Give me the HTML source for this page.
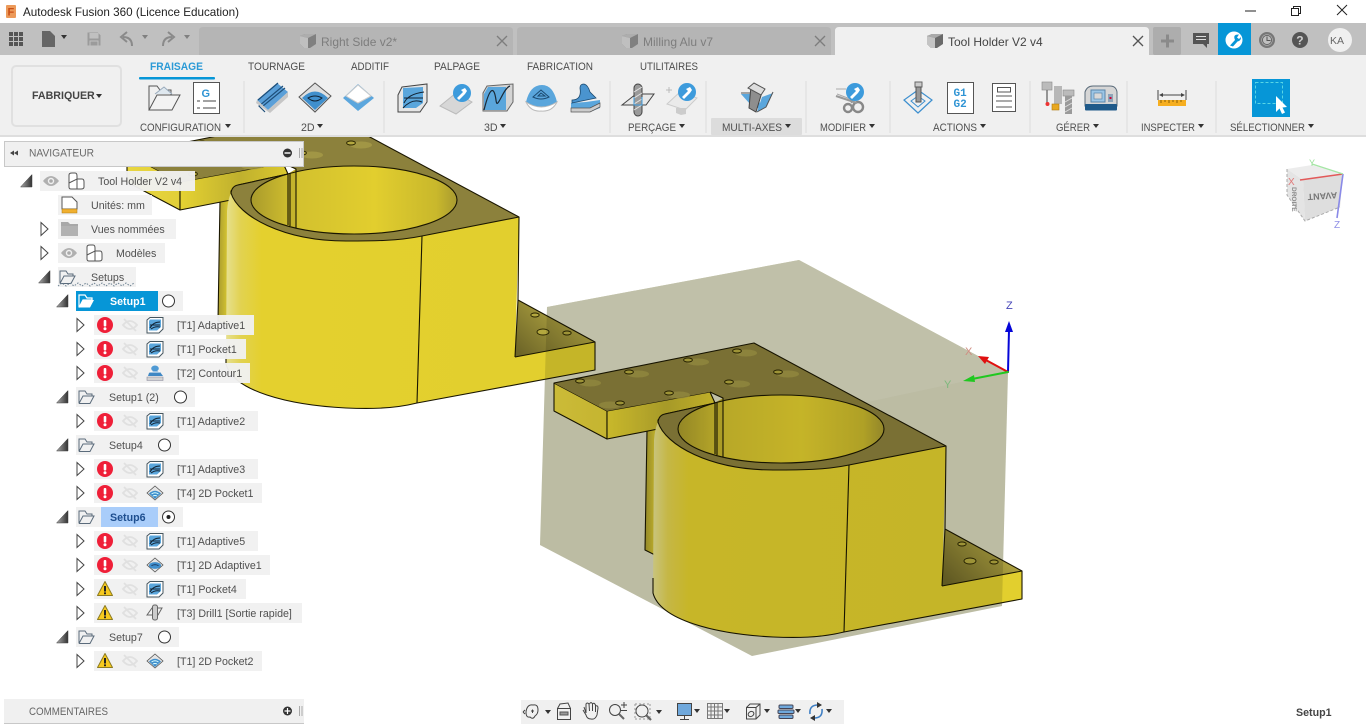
<!DOCTYPE html>
<html lang="fr">
<head>
<meta charset="utf-8">
<title>Autodesk Fusion 360</title>
<style>
html,body{margin:0;padding:0;background:#fff;width:1366px;height:728px;overflow:hidden}
svg{position:absolute;left:0;top:0;display:block}
text{font-family:"Liberation Sans",Arial,sans-serif}
.t{font-size:10.67px;fill:#505050}
.h{font-size:10.67px;fill:#4c4c4c}
.s{font-size:10.67px;fill:#4f4f4f}
.tab{font-size:12px;fill:#7d7d7d}
.e{stroke:#1a1600;stroke-width:1.1;stroke-linejoin:round}
.n{fill:none}
</style>
</head>
<body>
<svg width="1366" height="728" viewBox="0 0 1366 728" xmlns="http://www.w3.org/2000/svg">
<defs>
<linearGradient id="cyl" gradientUnits="userSpaceOnUse" x1="653" x2="950" y1="0" y2="0">
<stop offset="0" stop-color="#e6e090"/><stop offset=".05" stop-color="#e2d250"/><stop offset=".12" stop-color="#e4d02e"/><stop offset="1" stop-color="#e2cf2e"/>
</linearGradient>
<linearGradient id="hole" gradientUnits="userSpaceOnUse" x1="678" x2="884" y1="0" y2="0">
<stop offset="0" stop-color="#a89a2c"/><stop offset=".2" stop-color="#d2c02e"/><stop offset=".6" stop-color="#e2ce2e"/><stop offset=".9" stop-color="#c9b82c"/><stop offset="1" stop-color="#a89a30"/>
</linearGradient>
<linearGradient id="fl" gradientUnits="userSpaceOnUse" x1="607" x2="715" y1="0" y2="0">
<stop offset="0" stop-color="#e6d332"/><stop offset=".55" stop-color="#bfb02e"/><stop offset="1" stop-color="#dcc92e"/>
</linearGradient>
<linearGradient id="fl2" gradientUnits="userSpaceOnUse" x1="554" x2="607" y1="0" y2="0">
<stop offset="0" stop-color="#e8d640"/><stop offset="1" stop-color="#e2cf38"/>
</linearGradient>
<linearGradient id="str" gradientUnits="userSpaceOnUse" x1="645" x2="656" y1="0" y2="0">
<stop offset="0" stop-color="#a99c30"/><stop offset="1" stop-color="#dccb30"/>
</linearGradient>
<linearGradient id="ft" gradientUnits="userSpaceOnUse" x1="945" y1="580" x2="985" y2="540">
<stop offset="0" stop-color="#6e6628"/><stop offset="1" stop-color="#ab9f3f"/>
</linearGradient>
<linearGradient id="tri" x1="0" x2="1" y1="0" y2="0">
<stop offset="0" stop-color="#aaa"/><stop offset="1" stop-color="#333"/>
</linearGradient>

<g id="model">
  <polygon points="647,425 656,425 656,555 645,550" style="fill:url(#str)"/>
  <path class="e n" d="M647,430 L645,550 L655,555"/>
  <polygon class="e" points="554,383 607,411 607,439 554,411" style="fill:url(#fl2)"/>
  <polygon class="e" points="607,411 710,392 715,403 665,414 658,420 658,429 607,439" style="fill:url(#fl)"/>
  <path d="M653,590 L654,440 Q655,428 658,422 C665,445 710,470 773,470 C800,470 825,470 849,465 L946,446 L942,586 L1022,571 L1022,599 L844,632 C820,638 795,638 773,637 C715,634 660,620 653,593Z" style="fill:url(#cyl)"/>
  <path d="M554,383 L754,343 L946,446 L849,465 C825,470 800,470 773,470 C710,470 665,445 658,422 Q659,415 665,414 L715,403 L723,398 L710,392 L607,411Z" fill="#8c813c"/>
  <g fill="#a99d48" opacity=".75">
    <ellipse cx="590" cy="383" rx="11" ry="3.5"/><ellipse cx="638" cy="374" rx="11" ry="3.5"/>
    <ellipse cx="698" cy="362" rx="11" ry="3.5"/><ellipse cx="746" cy="353" rx="11" ry="3.500"/>
    <ellipse cx="788" cy="374" rx="11" ry="3.5"/><ellipse cx="739" cy="384" rx="11" ry="3.5"/>
    <ellipse cx="679" cy="395" rx="11" ry="3.5"/><ellipse cx="610" cy="405" rx="11" ry="3.5"/>
  </g>
  <ellipse cx="781" cy="429" rx="103" ry="34" style="fill:url(#hole)"/>
  <polygon points="715,403 723,398 723,457 715,454" fill="#c4b32c"/>
  <ellipse class="e n" cx="781" cy="429" rx="103" ry="34"/>
  <path class="e n" d="M710,392 L723,398 L723,457 M715,403 L715,454 M717,402 L717,455"/>
  <path class="e n" d="M554,383 L754,343 L946,446 L849,465 C825,470 800,470 773,470 C710,470 665,445 658,422 Q659,415 665,414 L715,403"/>
  <path class="e n" d="M849,465 L844,632"/>
  <polygon points="945,529 1022,571 942,586" style="fill:url(#ft)"/>
  <path class="e n" d="M946,446 L945,529 M942,586 L945,529 L1022,571 L942,586 M1022,571 L1022,599 L844,632 C820,638 795,638 773,637 C715,634 660,620 653,593 L653,578"/>
  <g fill="#b4a83f" stroke="#2a2500" stroke-width=".9">
    <ellipse cx="580" cy="381" rx="4.4" ry="2"/><ellipse cx="629" cy="372" rx="4.4" ry="2"/>
    <ellipse cx="688" cy="360" rx="4.4" ry="2"/><ellipse cx="737" cy="351" rx="4.4" ry="2"/>
    <ellipse cx="778" cy="372" rx="4.4" ry="2"/><ellipse cx="729" cy="382" rx="4.4" ry="2"/>
    <ellipse cx="669" cy="393" rx="4.4" ry="2"/><ellipse cx="620" cy="403" rx="4.4" ry="2"/>
    <ellipse cx="962" cy="544" rx="4.2" ry="2"/><ellipse cx="970" cy="561" rx="6" ry="3"/><ellipse cx="994" cy="562" rx="4.2" ry="2"/>
  </g>
</g>

<path id="dn" d="M-3,-2 L3,-2 L0,2Z" fill="#333"/>
<path id="cl" d="M-3.5,-6.5 L3.5,0 L-3.5,6.5Z" fill="#fff" stroke="#444" stroke-width="1"/>
<path id="ex" d="M5.5,-6.5 L5.5,6 L-6,6Z" fill="url(#tri)" stroke="#444" stroke-width=".5"/>
<g id="err"><circle r="8" fill="#ef1f38"/><rect x="-1.3" y="-5" width="2.6" height="6.5" rx="1" fill="#fff"/><circle cy="3.8" r="1.5" fill="#fff"/></g>
<g id="warn"><path d="M0,-7.5 L7.5,6.5 L-7.5,6.5Z" fill="#f6c91e" stroke="#8d7c22" stroke-width="1" stroke-linejoin="round"/><rect x="-1" y="-3" width="2" height="5.5" fill="#222"/><rect x="-1" y="3.4" width="2" height="1.8" fill="#222"/></g>
<g id="eyeoff" stroke="#e0e0e0" fill="none" stroke-width="1.8"><path d="M-7,0 Q0,-8 7,0 Q0,8 -7,0Z"/><path d="M-6,-6 L6,6"/></g>
<g id="eye"><path d="M-8,0 Q0,-10 8,0 Q0,10 -8,0Z" fill="#b0b0b0"/><circle r="3.2" fill="#f0f0f0"/><circle r="1.8" fill="#aaa"/></g>
<g id="body" fill="#fff" stroke="#555" stroke-width="1"><path d="M-7,-6 Q-7,-8 -4,-8 L-1,-8 Q1,-8 1,-5 L1,-2 L6,-2 Q8,-2 8,1 L8,6 Q8,8 5,8 L-5,8 Q-7,8 -7,6Z"/><path d="M-7,2 L1,-2 L1,8" fill="none"/></g>
<g id="fold"><path d="M-7,6.5 L-7,-6 L-1,-6 L1,-3 L6,-3 L6,-1 M-7,6.5 L4,6.5 L8,-1 L-3,-1 L-7,6.5" fill="none" stroke="#5b6b7b" stroke-width="1"/></g>
<g id="foldw"><path d="M-7,6.5 L-7,-6 L-1,-6 L1,-3 L6,-3 L6,-1 L-3,-1 L-7,6.5" fill="none" stroke="#fff" stroke-width="1.2"/><path d="M-7,6.5 L4,6.5 L8,-1 L-3,-1Z" fill="#fff"/></g>
<g id="ad"><path d="M-5,-7.500 L8,-7.500 L8,4 L4,8 L-8,8 L-8,-5Z" fill="#fff" stroke="#46565f" stroke-width="1"/><path d="M-5,-5.500 L6,-5.500 L6,2 L2,5.500 L-6,5.500 L-6,-4Z" fill="#5aa6dc"/><path d="M-5,3 Q-2,-3 5,-3 M-5,0 L5,0 M-4,4 Q0,1 5,2" stroke="#123" stroke-width="1" fill="none"/></g>
<g id="cont"><ellipse cy="-4.5" rx="3.8" ry="3" fill="#4f9ad4"/><path d="M-6,0 Q0,-4 5,-1 L8,3 L-7,3Z" fill="#3f88c4"/><path d="M-8,4 L8,4 L8,7.5 L-8,7.5Z" fill="#d3d3d3" stroke="#889" stroke-width=".6"/><path d="M-5,-1 L5,-1" stroke="#fff"/></g>
<g id="dp"><path d="M0,-7 L8,0 L0,7 L-8,0Z" fill="#e4e4e4" stroke="#555" stroke-width=".8"/><path d="M-6,0.5 Q0,-5 6,0.5 L0,6 Z" fill="#3f8fcd"/><path d="M-3.5,1 Q0,-1.5 3.5,1 M-2,3 Q0,2 2,3" stroke="#dff" fill="none" stroke-width=".9"/></g>
<g id="da"><path d="M0,-7 L8,0 L0,7 L-8,0Z" fill="#e4e4e4" stroke="#555" stroke-width=".8"/><ellipse cy=".5" rx="6" ry="3.4" fill="#3f8fcd"/><path d="M-3.5,.5 Q0,-1 3.5,.5" stroke="#124" fill="none" stroke-width=".8"/></g>
<g id="dr"><path d="M-8,2 L-3,-5 L7,-5 L3,2Z" fill="none" stroke="#666"/><rect x="-2.5" y="-8" width="5" height="15" rx="2" fill="#ccc" stroke="#666"/></g>
<g id="cube"><path d="M-8,-5 L-3,-7 L8,-7 L8,3 L2,7 L-4,7 L-8,3Z" fill="#6a6a6a"/><path d="M-8,-5 L0,-3 L8,-7 L-3,-7Z" fill="#aaa"/><path d="M-8,-5 L0,-3 L0,7 L-4,7 L-8,3Z" fill="#c4c4c4"/></g>
</defs>

<!-- white page -->
<rect width="1366" height="728" fill="#fff"/>

<!-- stock box -->
<polygon points="547,307 799,260 1008,372 1002,606 752,656 540,545" fill="#d7d7bb"/>
<polygon points="547,307 799,260 1008,372 760,425 553,400" fill="#dcdcc2"/>

<!-- models -->
<use href="#model" transform="translate(-427 -229)"/>
<use href="#model"/>
<polygon points="547,307 799,260 1008,372 1002,606 752,656 540,545" fill="#000" fill-opacity=".125"/>

<!-- triad -->
<g stroke-linecap="round">
  <path d="M1008,372 L1009,330" stroke="#0505d8" stroke-width="2"/>
  <path d="M1009,321 L1013,332 L1005,332Z" fill="#0505d8"/>
  <path d="M1008,372 L984,359" stroke="#e01010" stroke-width="2"/>
  <path d="M978,356 L989,357 L985,364Z" fill="#e01010"/>
  <path d="M1008,372 L972,379" stroke="#20c820" stroke-width="2"/>
  <path d="M963,381 L974,375 L975,382Z" fill="#20c820"/>
</g>
<text x="1006" y="309" font-size="11" fill="#4545b8">Z</text>
<text x="965" y="355" font-size="11" fill="#cf8c80">X</text>
<text x="944" y="388" font-size="11" fill="#7cb87c">Y</text>

<!-- view cube -->
<g>
  <polygon points="1287,169 1312,165 1343,174 1303,180" fill="#ececec"/>
  <polygon points="1287,169 1303,180 1305,221 1287,195" fill="#e4e4e4"/>
  <polygon points="1303,180 1343,174 1340,207 1305,221" fill="#dedede"/>
  <path d="M1287,169 L1287,195 L1305,221 L1340,207" fill="none" stroke="#aaa" stroke-dasharray="3 2"/>
  <path d="M1300,180 L1343,174" stroke="#e25a5a" stroke-width="1.6"/>
  <path d="M1343,174 L1337,218" stroke="#8a8ae8" stroke-width="1.6"/>
  <path d="M1312,164 L1343,174" stroke="#a5e6a5" stroke-width="1.4"/>
  <text x="1288" y="185" font-size="10" fill="#e07878">X</text>
  <text x="1309" y="166" font-size="9" fill="#98e098">Y</text>
  <text x="1334" y="228" font-size="10" fill="#9090e6">Z</text>
  <text transform="translate(1337,192) rotate(176)" font-size="9" font-weight="bold" fill="#777">AVANT</text>
  <text transform="translate(1292,187) rotate(90)" font-size="6.5" font-weight="bold" fill="#888">DROITE</text>
</g>

<!-- title bar -->
<rect x="0" y="0" width="1366" height="23" fill="#fff"/>
<rect x="6" y="5" width="10" height="13" rx="1" fill="#ec9a5a"/>
<text x="7.5" y="15.5" font-size="11" font-weight="bold" fill="#c94f16">F</text>
<text x="23" y="16" font-size="12" fill="#222" textLength="216" lengthAdjust="spacingAndGlyphs">Autodesk Fusion 360 (Licence Education)</text>
<path d="M1245,11 H1256" stroke="#222" stroke-width="1"/>
<path d="M1291.5,8.5 H1298.5 V15.5 H1291.5Z M1293.5,8.5 V6.5 H1300.5 V13.5 H1298.5" fill="#fff" stroke="#222" stroke-width="1"/>
<path d="M1337,5 L1347,15 M1347,5 L1337,15" stroke="#222" stroke-width="1"/>

<!-- tab bar -->
<rect x="0" y="23" width="1366" height="32" fill="#c0c0c0"/>
<g fill="#555">
  <rect x="9" y="32" width="4" height="4"/><rect x="14" y="32" width="4" height="4"/><rect x="19" y="32" width="4" height="4"/>
  <rect x="9" y="37" width="4" height="4"/><rect x="14" y="37" width="4" height="4"/><rect x="19" y="37" width="4" height="4"/>
  <rect x="9" y="42" width="4" height="4"/><rect x="14" y="42" width="4" height="4"/><rect x="19" y="42" width="4" height="4"/>
</g>
<path d="M42,31 H50 L55,36 V47 H42Z" fill="#666"/>
<use href="#dn" x="64" y="37"/>
<path d="M87,32 H98 L101,35 V46 H87Z M90,33 V38 H98 V33 M90,46 V41 H98 V46" fill="#9b9b9b" stroke="#c0c0c0" stroke-width="1"/>
<path d="M132,46 Q132,37 123,37 M127,32 L121,37 L127,42" fill="none" stroke="#8a8a8a" stroke-width="2"/>
<use href="#dn" x="145" y="37" opacity=".45"/>
<path d="M163,46 Q163,37 172,37 M168,32 L174,37 L168,42" fill="none" stroke="#8a8a8a" stroke-width="2"/>
<use href="#dn" x="187" y="37" opacity=".45"/>

<path d="M199,31 Q199,27 203,27 H509 Q513,27 513,31 V55 H199Z" fill="#b5b5b5"/>
<path d="M517,31 Q517,27 521,27 H827 Q831,27 831,31 V55 H517Z" fill="#b5b5b5"/>
<path d="M835,31 Q835,27 839,27 H1145 Q1149,27 1149,31 V55 H835Z" fill="#f0f0f0"/>
<use href="#cube" x="308" y="41" opacity=".7"/>
<use href="#cube" x="630" y="41" opacity=".7"/>
<use href="#cube" x="935" y="41"/>
<text x="321" y="46" class="tab">Right Side v2*</text>
<text x="643" y="46" class="tab">Milling Alu v7</text>
<text x="948" y="46" font-size="12" fill="#444">Tool Holder V2 v4</text>
<path d="M497,36 L507,46 M507,36 L497,46 M815,36 L825,46 M825,36 L815,46" stroke="#7d7d7d" stroke-width="1.3"/>
<path d="M1133,36 L1143,46 M1143,36 L1133,46" stroke="#555" stroke-width="1.3"/>
<rect x="1153" y="27" width="28" height="28" rx="2" fill="#adadad"/>
<path d="M1161,41 H1174 M1167.5,34.5 V47.5" stroke="#8a8a8a" stroke-width="3"/>
<path d="M1193,33 H1209 V44 H1207 V48 L1203,44 H1193Z" fill="#555"/>
<path d="M1196,36.5 H1206 M1196,39.5 H1206" stroke="#ddd" stroke-width="1"/>
<rect x="1218" y="23" width="33" height="32" fill="#0696d7"/>
<circle cx="1234" cy="40" r="8.5" fill="#fff"/>
<path d="M1230,45.5 L1235,40 Q1233,36 1236,34.8 L1239,34.5 L1237,37.5 L1239,39 L1241,37 Q1241,41 1237.5,41.5 L1233,46.5Z" fill="#0696d7"/>
<circle cx="1267" cy="40" r="7.5" fill="#777" stroke="#777"/><circle cx="1267" cy="40" r="5.6" fill="#c0c0c0"/><circle cx="1267" cy="40" r="4.6" fill="none" stroke="#666"/><path d="M1267,36.5 V40.5 H1270.5" stroke="#555" fill="none"/>
<circle cx="1300" cy="40" r="8" fill="#555"/>
<text x="1296.3" y="44.5" font-size="12" font-weight="bold" fill="#d0d0d0">?</text>
<circle cx="1340" cy="40" r="12" fill="#f0f0f0"/>
<text x="1330" y="44" font-size="10.5" fill="#666">KA</text>

<!-- toolbar -->
<rect x="0" y="55" width="1366" height="81" fill="#f0f0f0"/>
<rect x="0" y="135" width="1366" height="2" fill="#dedede"/>
<rect x="12" y="66" width="109" height="60" rx="4" fill="#f0f0f0" stroke="#e0e0e0" stroke-width="2"/>
<text x="32" y="99" font-size="10.67" font-weight="bold" fill="#444">FABRIQUER</text>
<use href="#dn" x="99" y="96"/>

<text x="150" y="70" font-size="10.67" font-weight="bold" fill="#2b9ad6" textLength="53" lengthAdjust="spacingAndGlyphs">FRAISAGE</text>
<rect x="139" y="77" width="76" height="2.5" rx="1" fill="#0696d7"/>
<text class="h" x="248" y="70" textLength="57" lengthAdjust="spacingAndGlyphs">TOURNAGE</text>
<text class="h" x="351" y="70" textLength="38" lengthAdjust="spacingAndGlyphs">ADDITIF</text>
<text class="h" x="434" y="70" textLength="46" lengthAdjust="spacingAndGlyphs">PALPAGE</text>
<text class="h" x="527" y="70" textLength="66" lengthAdjust="spacingAndGlyphs">FABRICATION</text>
<text class="h" x="640" y="70" textLength="58" lengthAdjust="spacingAndGlyphs">UTILITAIRES</text>

<path d="M244,81 V133 M384,81 V133 M610,81 V133 M706,81 V133 M806,81 V133 M890,81 V133 M1030,81 V133 M1127,81 V133 M1216,81 V133" stroke="#e2e2e2" stroke-width="1.5"/>
<rect x="711" y="118" width="91" height="17" rx="1" fill="#dcdcdc"/>

<text class="s" x="140" y="131" textLength="81" lengthAdjust="spacingAndGlyphs">CONFIGURATION</text><use href="#dn" x="228" y="126"/>
<text class="s" x="301" y="131">2D</text><use href="#dn" x="320" y="126"/>
<text class="s" x="484" y="131">3D</text><use href="#dn" x="503" y="126"/>
<text class="s" x="628" y="131" textLength="48" lengthAdjust="spacingAndGlyphs">PERÇAGE</text><use href="#dn" x="682" y="126"/>
<text class="s" x="722" y="131" textLength="60" lengthAdjust="spacingAndGlyphs">MULTI-AXES</text><use href="#dn" x="788" y="126"/>
<text class="s" x="820" y="131" textLength="46" lengthAdjust="spacingAndGlyphs">MODIFIER</text><use href="#dn" x="872" y="126"/>
<text class="s" x="933" y="131" textLength="44" lengthAdjust="spacingAndGlyphs">ACTIONS</text><use href="#dn" x="983" y="126"/>
<text class="s" x="1056" y="131" textLength="34" lengthAdjust="spacingAndGlyphs">GÉRER</text><use href="#dn" x="1096" y="126"/>
<text class="s" x="1141" y="131" textLength="54" lengthAdjust="spacingAndGlyphs">INSPECTER</text><use href="#dn" x="1201" y="126"/>
<text class="s" x="1230" y="131" textLength="75" lengthAdjust="spacingAndGlyphs">SÉLECTIONNER</text><use href="#dn" x="1311" y="126"/>

<!-- toolbar icons -->
<g fill="none" stroke="#555" stroke-width="1">
  <path d="M149,110 V86 H157 L160,90 H171 V97" />
  <path d="M149,110 H172 L180,95 H157Z" fill="#f3f3f3"/>
  <path d="M155,94 L164,87 L172,94" fill="#dfe8ef" stroke="#9ab"/>
</g>
<rect x="193.500" y="82.500" width="26" height="31" fill="#fff" stroke="#555"/>
<text x="201.500" y="97" font-size="11" font-weight="bold" fill="#2f94d4">G</text>
<path d="M197,101 H200 M203,101 H216 M197,108 H200 M203,108 H216" stroke="#444" stroke-width="1"/>

<!-- 2D -->
<path d="M257,100 L277,83 L288,92 L268,110 Z" fill="#5a9fd8"/>
<path d="M265,112 L259,106 L283,86 M258,100 L278,83 M263,106 L285,88" stroke="#1e4f7a" stroke-width="1.2" fill="none"/>
<path d="M268,110 L288,92 L288,97 L270,113 L256,103 L257,100Z" fill="#c6c6c6"/>
<path d="M315,83 L331,96 L315,112 L299,97Z" fill="#e0e0e0" stroke="#555"/>
<path d="M302,98 Q315,85 328,98 L315,110Z" fill="#3f8fcd"/>
<path d="M308,98 Q315,94 322,98 Q315,104 308,98Z" fill="none" stroke="#123" />
<path d="M358,84 L374,98 L358,111 L343,98Z" fill="#5ba6dd"/>
<path d="M358,85 L371,96 L358,103 L346,96Z" fill="#fff" stroke="#ccc"/>

<!-- 3D -->
<path d="M402,87 L427,84 V102 L420,112 H398 V95Z" fill="#e6e6e6" stroke="#444"/>
<path d="M403,88 L423,87 V103 L416,108 H403Z" fill="#5aa6dc"/>
<path d="M404,103 Q408,94 424,92 M404,98 H423 M403,108 Q412,98 422,102" stroke="#123" fill="none"/>
<path d="M440,106 L456,93 L472,102 L456,114Z" fill="#d7d7d7" stroke="#bbb"/>
<circle cx="462" cy="93" r="9" fill="#3d9bdc"/>
<path d="M457,98 L463,92 L461,90 L465,88 L467,91 L465,94 L459,100Z" fill="#fff"/>
<path d="M487,86 L513,84 V102 L507,111 H483 V93Z" fill="#d4d4d4" stroke="#666"/>
<path d="M488,87 H506 V110 H484 V94Z" fill="#5aa6dc"/>
<path d="M484,110 C490,86 494,86 496,100 C497,112 503,88 510,86" stroke="#1a2a38" fill="none" stroke-width="1.2"/>
<path d="M526,102 Q530,85 542,85 Q553,85 557,102 Q542,112 526,102Z" fill="#5aa6dc"/>
<path d="M526,102 Q541,112 557,102 Q552,112 541,111 Q531,112 526,102Z" fill="#fff" stroke="#bbb"/>
<path d="M533,97 L541,90 L549,97 Q541,101 533,97Z" fill="none" stroke="#1b4a70"/><path d="M538,96 L541,93 L545,96Z" fill="none" stroke="#1b4a70"/>
<path d="M571,111 V103 L586,102 L600,100 V108 L590,112Z" fill="#5aa6dc"/>
<path d="M572,100 Q582,100 580,88 Q580,84 584,84 Q588,85 590,92 L596,98 L572,103Z" fill="#4a94cf" stroke="#1b4a70" stroke-width=".8"/>
<path d="M571,108 H590 L600,103 V107 L590,112 H571Z" fill="#ccc" stroke="#555" stroke-width=".7"/>

<!-- drill -->
<path d="M622,105 L636,94 H654 L646,105Z" fill="#e8e8e8" stroke="#444"/>
<rect x="634" y="84" width="8" height="32" rx="4" fill="#9a9a9a" stroke="#444"/>
<path d="M634,92 L642,87 M634,98 L642,93 M634,104 L642,99 M634,110 L642,105" stroke="#e0e0e0"/>
<path d="M634,97 V105 H642 V97" fill="none" stroke="#3d9bdc" stroke-width="1"/>
<path d="M666,90 H672 M669,87 V93" stroke="#bbb"/>
<path d="M667,104 L680,92 L697,98 L685,110Z" fill="#eaeaea" stroke="#ccc"/>
<path d="M676,108 H686 V114 L681,115 L676,113Z" fill="#ccc"/>
<circle cx="687" cy="92" r="9" fill="#3d9bdc"/>
<path d="M682,97 L688,91 L686,89 L690,87 L692,90 L690,93 L684,99Z" fill="#fff"/>

<!-- multi axes -->
<path d="M741,94 L757,94 L762,110 L750,104Z" fill="#5aa6dc"/>
<path d="M762,97 L773,93 L767,106 L757,112Z" fill="#5aa6dc"/>
<path d="M741,93 H757 M773,92 L766,107 L757,112" stroke="#555" fill="none"/>
<path d="M751,86 L762,92 L756,112 L749,108Z" fill="#8e8e8e" stroke="#444"/>
<path d="M748,88 L754,83 L765,89 L761,95Z" fill="#ddd" stroke="#555"/>

<!-- modifier -->
<path d="M836,89 H846 M837,94 L853,100" stroke="#aaa" fill="none"/>
<circle cx="848" cy="108" r="4" fill="none" stroke="#888" stroke-width="2.4"/>
<circle cx="858" cy="107" r="5" fill="none" stroke="#888" stroke-width="2.4"/>
<path d="M836,96 L857,103 M848,91 L852,103" stroke="#999" stroke-width="2"/>
<circle cx="855" cy="92" r="9" fill="#3d9bdc"/>
<path d="M850,97 L856,91 L854,89 L858,87 L860,90 L858,93 L852,99Z" fill="#fff"/>

<!-- actions -->
<path d="M918,90 L932,100 L918,113 L904,100Z" fill="none" stroke="#3d8fcf" stroke-width="1.2"/>
<path d="M918,96 L925,101 L918,107 L911,101Z" fill="none" stroke="#3d8fcf" stroke-width="1"/>
<rect x="915" y="82" width="7" height="5" fill="#ccc" stroke="#666"/>
<rect x="916" y="87" width="5" height="15" fill="#999" stroke="#555"/>
<rect x="947.500" y="82.500" width="26" height="31" fill="#fff" stroke="#555"/>
<text x="953.500" y="96" font-size="11" font-weight="bold" fill="#2f94d4" style="font-family:'Liberation Mono',monospace">G1</text>
<text x="953.500" y="107" font-size="11" font-weight="bold" fill="#2f94d4" style="font-family:'Liberation Mono',monospace">G2</text>
<rect x="992.500" y="83.500" width="23" height="28" fill="#fff" stroke="#555"/>
<rect x="997.500" y="87.500" width="13" height="4.500" fill="none" stroke="#555"/>
<path d="M996,96 H1012 M996,101 H1012 M996,107 H1012" stroke="#555"/>

<!-- manage -->
<rect x="1042" y="82" width="10" height="8" fill="#bbb" stroke="#888" stroke-width=".6"/>
<path d="M1047,90 V104" stroke="#777" stroke-width="1.5"/>
<circle cx="1047.500" cy="104" r="2" fill="#e33"/>
<rect x="1054" y="86" width="8" height="18" fill="#b7b7b7"/>
<rect x="1052" y="104" width="7" height="6" fill="#e8a820" stroke="#b07a10" stroke-width=".6"/>
<rect x="1063" y="90" width="11" height="6" fill="#bbb" stroke="#888" stroke-width=".6"/>
<rect x="1065" y="96" width="7" height="18" fill="#9a9a9a"/>
<path d="M1065,102 L1072,98 M1065,107 L1072,103 M1065,112 L1072,108" stroke="#ddd"/>
<path d="M1085,92 Q1087,86 1093,86 H1110 Q1116,86 1117,92 V106 H1085Z" fill="#d6d6d6" stroke="#5a6b7a"/>
<rect x="1085" y="104" width="32" height="6.500" rx="1" fill="#1f5a8a"/>
<rect x="1091" y="90" width="14" height="12" fill="#9cc6e6" stroke="#5a86aa"/>
<rect x="1094" y="93" width="8" height="6" fill="#d8d8d8" stroke="#5a86aa" stroke-width=".7"/>
<rect x="1108" y="94" width="5" height="8" fill="#8ea4b8"/><rect x="1109.500" y="97" width="2" height="2" fill="#c03"/>

<!-- inspect -->
<path d="M1158,90 V100 M1186,90 V100 M1160,95 H1184" stroke="#444" stroke-width="1"/>
<path d="M1159,95 L1163,93 V97Z M1185,95 L1181,93 V97Z" fill="#444"/>
<rect x="1158" y="100" width="28" height="6" fill="#f6ae1f"/>
<path d="M1161,100 V103 M1165,100 V102 M1169,100 V103 M1173,100 V102 M1177,100 V103 M1181,100 V102" stroke="#704a00" stroke-width=".8"/>

<!-- select -->
<rect x="1252" y="79" width="38" height="38" fill="#0696d7"/>
<rect x="1255.500" y="82.500" width="27" height="21" fill="none" stroke="#58d6e6" stroke-width="1" stroke-dasharray="3 2"/>
<path d="M1276,96 L1276,112 L1279.500,108.500 L1282,114 L1285,112.500 L1282.500,107.500 L1287,107Z" fill="#fff"/>

<!-- navigator -->
<rect x="4.500" y="141.500" width="299" height="25" fill="#f0f0f0" stroke="#c8c8c8"/>
<path d="M10,153 L14,150.500 V155.500Z M14,153 L18,150.500 V155.500Z" fill="#444"/>
<text x="29" y="156.500" font-size="10.67" fill="#6a6a6a" textLength="65" lengthAdjust="spacingAndGlyphs">NAVIGATEUR</text>
<circle cx="287.500" cy="153" r="4.500" fill="#333"/><rect x="284.500" y="152.300" width="6" height="1.400" fill="#fff"/>
<path d="M299.500,148 V158 M302,148 V158" stroke="#aaa"/>

<!-- tree rows -->
<g fill="#f0f0f0" fill-opacity=".96">
<rect x="40" y="171" width="155" height="20"/>
<rect x="58" y="195" width="94" height="20"/>
<rect x="58" y="219" width="118" height="20"/>
<rect x="58" y="243" width="107" height="20"/>
<rect x="58" y="267" width="78" height="20"/>
<rect x="76" y="291" width="107" height="20"/>
<rect x="94" y="315" width="160" height="20"/>
<rect x="94" y="339" width="152" height="20"/>
<rect x="94" y="363" width="156" height="20"/>
<rect x="76" y="387" width="119" height="20"/>
<rect x="94" y="411" width="164" height="20"/>
<rect x="76" y="435" width="103" height="20"/>
<rect x="94" y="459" width="164" height="20"/>
<rect x="94" y="483" width="168" height="20"/>
<rect x="76" y="507" width="107" height="20"/>
<rect x="94" y="531" width="164" height="20"/>
<rect x="94" y="555" width="176" height="20"/>
<rect x="94" y="579" width="152" height="20"/>
<rect x="94" y="603" width="208" height="20"/>
<rect x="76" y="627" width="103" height="20"/>
<rect x="94" y="651" width="168" height="20"/>
</g>
<rect x="76" y="291" width="82" height="20" fill="#0696d7"/>
<rect x="101" y="507" width="57" height="20" fill="#a9cdfa"/>

<use href="#ex" x="26.500" y="181"/>
<use href="#eye" x="51" y="181"/>
<use href="#body" x="76" y="181"/>
<text class="t" x="98" y="185">Tool Holder V2 v4</text>

<path d="M62,197 H72 L77,202 V209 H62Z" fill="#fff" stroke="#555"/>
<rect x="62" y="209" width="15" height="4" fill="#f0b030" stroke="#b07a10" stroke-width=".5"/>
<text class="t" x="91" y="209">Unités: mm</text>

<use href="#cl" x="44.500" y="229"/>
<path d="M61,222 H68 L70,224 H78 V236 H61Z" fill="#a8a8a8"/>
<rect x="61" y="226" width="17" height="10" fill="#b2b2b2"/>
<text class="t" x="91" y="233">Vues nommées</text>

<use href="#cl" x="44.500" y="253"/>
<use href="#eye" x="69" y="253"/>
<use href="#body" x="94" y="253"/>
<text class="t" x="116" y="257">Modèles</text>

<use href="#ex" x="44.500" y="277"/>
<use href="#fold" x="67" y="277"/>
<text class="t" x="91" y="281">Setups</text>
<path d="M58,286 L62,283 L66,286 L70,283 L74,286 L78,283 L82,286 L86,283 L90,286 L94,283 L98,286 L102,283 L106,286 L110,283 L114,286 L118,283 L122,286 L126,283 L130,286 L134,283" fill="none" stroke="#6a7f90" stroke-width="1" stroke-dasharray="1.5 1.5"/>

<use href="#ex" x="62.500" y="301"/>
<use href="#foldw" x="86" y="301"/>
<text x="110" y="305" font-size="10.67" font-weight="bold" fill="#fff">Setup1</text>
<circle cx="168.500" cy="301" r="6" fill="#fff" stroke="#333"/>

<use href="#cl" x="80.500" y="325"/><use href="#err" x="105" y="325"/><use href="#eyeoff" x="130" y="325"/><use href="#ad" x="155" y="325"/>
<text class="t" x="177" y="329">[T1] Adaptive1</text>
<use href="#cl" x="80.500" y="349"/><use href="#err" x="105" y="349"/><use href="#eyeoff" x="130" y="349"/><use href="#ad" x="155" y="349"/>
<text class="t" x="177" y="353">[T1] Pocket1</text>
<use href="#cl" x="80.500" y="373"/><use href="#err" x="105" y="373"/><use href="#eyeoff" x="130" y="373"/><use href="#cont" x="155" y="373"/>
<text class="t" x="177" y="377">[T2] Contour1</text>

<use href="#ex" x="62.500" y="397"/>
<use href="#fold" x="86" y="397"/>
<text class="t" x="109" y="401">Setup1 (2)</text>
<circle cx="180.500" cy="397" r="6" fill="#fff" stroke="#333"/>
<use href="#cl" x="80.500" y="421"/><use href="#err" x="105" y="421"/><use href="#eyeoff" x="130" y="421"/><use href="#ad" x="155" y="421"/>
<text class="t" x="177" y="425">[T1] Adaptive2</text>

<use href="#ex" x="62.500" y="445"/>
<use href="#fold" x="86" y="445"/>
<text class="t" x="109" y="449">Setup4</text>
<circle cx="164.500" cy="445" r="6" fill="#fff" stroke="#333"/>
<use href="#cl" x="80.500" y="469"/><use href="#err" x="105" y="469"/><use href="#eyeoff" x="130" y="469"/><use href="#ad" x="155" y="469"/>
<text class="t" x="177" y="473">[T1] Adaptive3</text>
<use href="#cl" x="80.500" y="493"/><use href="#err" x="105" y="493"/><use href="#eyeoff" x="130" y="493"/><use href="#dp" x="155" y="493"/>
<text class="t" x="177" y="497">[T4] 2D Pocket1</text>

<use href="#ex" x="62.500" y="517"/>
<use href="#fold" x="86" y="517"/>
<text x="110" y="521" font-size="10.67" font-weight="bold" fill="#1d4e8f">Setup6</text>
<circle cx="168.500" cy="517" r="6" fill="#fff" stroke="#333"/><circle cx="168.500" cy="517" r="2" fill="#222"/>
<use href="#cl" x="80.500" y="541"/><use href="#err" x="105" y="541"/><use href="#eyeoff" x="130" y="541"/><use href="#ad" x="155" y="541"/>
<text class="t" x="177" y="545">[T1] Adaptive5</text>
<use href="#cl" x="80.500" y="565"/><use href="#err" x="105" y="565"/><use href="#eyeoff" x="130" y="565"/><use href="#da" x="155" y="565"/>
<text class="t" x="177" y="569">[T1] 2D Adaptive1</text>
<use href="#cl" x="80.500" y="589"/><use href="#warn" x="105" y="589"/><use href="#eyeoff" x="130" y="589"/><use href="#ad" x="155" y="589"/>
<text class="t" x="177" y="593">[T1] Pocket4</text>
<use href="#cl" x="80.500" y="613"/><use href="#warn" x="105" y="613"/><use href="#eyeoff" x="130" y="613"/><use href="#dr" x="155" y="613"/>
<text class="t" x="177" y="617">[T3] Drill1 [Sortie rapide]</text>

<use href="#ex" x="62.500" y="637"/>
<use href="#fold" x="86" y="637"/>
<text class="t" x="109" y="641">Setup7</text>
<circle cx="164.500" cy="637" r="6" fill="#fff" stroke="#333"/>
<use href="#cl" x="80.500" y="661"/><use href="#warn" x="105" y="661"/><use href="#eyeoff" x="130" y="661"/><use href="#dp" x="155" y="661"/>
<text class="t" x="177" y="665">[T1] 2D Pocket2</text>

<!-- comments -->
<rect x="4" y="699" width="300" height="24" fill="#f0f0f0"/>
<rect x="4" y="723" width="300" height="1" fill="#c8c8c8"/>
<text x="29" y="715" font-size="10.67" fill="#666" textLength="79" lengthAdjust="spacingAndGlyphs">COMMENTAIRES</text>
<circle cx="287.500" cy="711" r="4.500" fill="#333"/><path d="M284.500,711 H290.500 M287.500,708 V714" stroke="#fff" stroke-width="1.200"/>
<path d="M299.500,706 V716 M302,706 V716" stroke="#aaa"/>

<!-- bottom nav bar -->
<rect x="521" y="700" width="323" height="24" fill="#f0f0f0"/>
<g fill="none" stroke="#444" stroke-width="1">
  <path d="M526,712 Q527,704 533,705 Q538,704 538,710 Q538,714 535,716 Q533,720 530,717 Q526,718 526,712Z"/>
  <path d="M523,712 L525,710 M523,712 L525,714 M531,711 H534 M532.500,709.500 V713"/>
  <rect x="557.500" y="708.500" width="13" height="11"/><path d="M557.500,708.500 L560,704 L568,703 L570.500,708.500"/><rect x="560" y="712" width="8" height="3" fill="#999" stroke="#555"/>
  <path d="M586,713 L584,707 M586,713 V704 Q587,702 589,704 L589.500,711 M589.500,704 Q591,701 592.500,704 V711 M592.500,704 Q594,702 595.500,705 V712 M595.500,706 Q598,705 598,708 L597,715 Q595,720 591,719 Q587,719 586,715 L583,710"/>
  <circle cx="615" cy="710" r="5.500"/><path d="M619,714 L624,719" stroke-width="2" stroke="#666"/><path d="M621,705 H627 M624,702 V708 M621,710.500 H627"/>
  <path d="M635,704 H650 M635,719 H650 M635,704 V719 M650,704 V719" stroke="#999" stroke-dasharray="2 2"/><circle cx="642" cy="711" r="6"/><path d="M646.500,715.500 L651,720" stroke-width="2.200" stroke="#666"/>
  <rect x="677.500" y="703.500" width="14" height="12" fill="#6fa8dc" stroke="#444"/><path d="M684.500,716 V719 M680,719.500 H689"/>
  <g stroke="#777"><rect x="707.500" y="703.500" width="15" height="15"/><path d="M711,704 V718 M714.500,704 V718 M718,704 V718 M708,707 H722 M708,711 H722 M708,715 H722"/></g>
  <path d="M746.500,707.500 L750,704 H760 V715 L756,719 H746.500Z M746.500,707.500 H756 V719 M756,707.500 L760,704"/>
  <ellipse cx="751" cy="714" rx="3" ry="2.400" transform="rotate(-30 751 714)"/>
  <g stroke="#445" fill="#6fa8dc"><rect x="779" y="705" width="14" height="3.500" rx="1"/><rect x="778" y="710" width="16" height="3.500" rx="1"/><rect x="779" y="715" width="14" height="3.500" rx="1"/></g>
  <path d="M810,714 Q809,705 818,705" stroke="#3f7fc4" stroke-width="1.600"/><path d="M822,709 Q823,718 814,718" stroke="#3f7fc4" stroke-width="1.600"/>
  <path d="M817,702 L822,705 L817,708Z M815,715 L810,718 L815,721Z" fill="#333" stroke="none"/>
</g>
<use href="#dn" x="548" y="712"/><use href="#dn" x="659" y="712"/><use href="#dn" x="697" y="711"/><use href="#dn" x="727" y="711"/>
<use href="#dn" x="767" y="711"/><use href="#dn" x="798" y="711"/><use href="#dn" x="829" y="711"/>

<text x="1296" y="716" font-size="10.67" font-weight="bold" fill="#444">Setup1</text>
</svg>
</body>
</html>
